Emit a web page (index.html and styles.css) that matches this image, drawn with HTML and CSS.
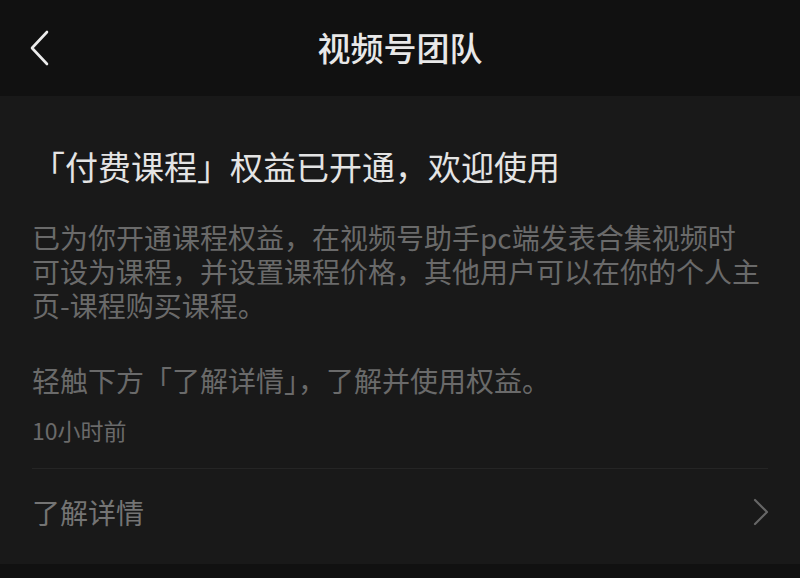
FILE: index.html
```html
<!DOCTYPE html>
<html lang="zh-CN">
<head>
<meta charset="utf-8">
<title>视频号团队</title>
<link rel="stylesheet" href="styles.css">
</head>
<body>
<div class="page">
  <header class="nav">
    <div class="back">
      <svg width="20" height="36" viewBox="0 0 20 36" aria-hidden="true">
        <polyline points="17,2 2,18 17,34" fill="none" stroke="#ececec" stroke-width="2.6" stroke-linecap="round" stroke-linejoin="round"/>
      </svg>
    </div>
    <div class="nav-title">视频号团队</div>
    <div class="nav-side"></div>
  </header>
  <main class="card">
    <h1 class="heading">「付费课程」权益已开通，欢迎使用</h1>
    <p class="body">已为你开通课程权益，在视频号助手pc端发表合集视频时<br>可设为课程，并设置课程价格，其他用户可以在你的个人主<br>页-课程购买课程。</p>
    <p class="body body-second">轻触下方「了解详情」，了解并使用权益。</p>
    <div class="time">10小时前</div>
    <div class="divider"></div>
    <div class="row">
      <span class="row-label">了解详情</span>
      <svg class="row-arrow" width="16" height="28" viewBox="0 0 16 28" aria-hidden="true">
        <polyline points="2,2 14,14 2,26" fill="none" stroke="#666666" stroke-width="2.2" stroke-linecap="round" stroke-linejoin="round"/>
      </svg>
    </div>
  </main>
</div>
</body>
</html>
```

FILE: styles.css
```css
* {
  box-sizing: border-box;
}

html, body {
  margin: 0;
  padding: 0;
  background: #111111;
}

body {
  width: 800px;
  height: 578px;
  overflow: hidden;
  font-family: "Noto Sans CJK SC", "Noto Sans", sans-serif;
}

.page {
  display: flex;
  flex-direction: column;
}

.nav {
  height: 96px;
  background: #111111;
  display: flex;
  align-items: center;
  padding: 0 30px;
}

.back {
  width: 60px;
  display: flex;
  align-items: center;
  height: 36px;
  margin-top: -1px;
}

.nav-title {
  flex: 1;
  text-align: center;
  color: #e8e8e8;
  font-size: 33px;
  font-weight: 500;
  line-height: 44px;
  margin-top: -2px;
}

.nav-side {
  width: 60px;
}

.card {
  background: #191919;
  height: 468px;
  padding: 48px 32px 0;
  display: flex;
  flex-direction: column;
}

.heading {
  margin: 0;
  font-size: 33px;
  font-weight: 400;
  line-height: 44px;
  color: #e4e4e4;
  white-space: nowrap;
}

.body {
  margin: 32px 0 0;
  font-size: 28px;
  line-height: 34px;
  color: #6a6a6a;
  white-space: nowrap;
}

.body-second {
  margin-top: 41px;
}

.time {
  margin-top: 18px;
  font-size: 23px;
  line-height: 30px;
  color: #6a6a6a;
}

.divider {
  margin-top: 23px;
  height: 1px;
  background: #252525;
}

.row {
  height: 86px;
  display: flex;
  align-items: center;
  justify-content: space-between;
}

.row-label {
  font-size: 28px;
  line-height: 40px;
  color: #747474;
}

.row-arrow {
  display: block;
  margin-right: -1px;
}
```
